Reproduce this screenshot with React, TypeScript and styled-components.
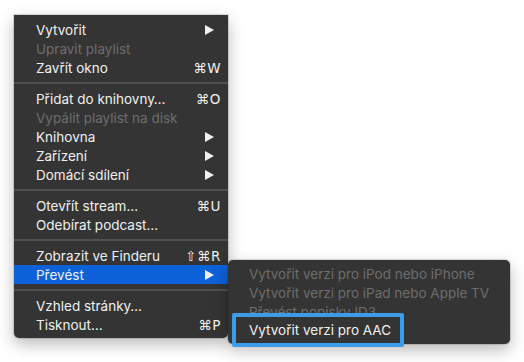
import React from "react"
import styled, { createGlobalStyle } from "styled-components"

const Global = createGlobalStyle`
  html, body {
    margin: 0;
    background: #ffffff;
  }
  body {
    font-family: "Inter", "Liberation Sans", "DejaVu Sans", sans-serif;
  }
`

const Page = styled.div`
  width: 524px;
  height: 362px;
  padding: 15px 0 0 14px;
  box-sizing: border-box;
`

const Menu = styled.div`
  position: relative;
  width: 214px;
  padding: 5px 0 4px 0;
  background: #343434;
  border-radius: 0 0 5px 5px;
  box-shadow: 0 0 0 1px rgba(0, 0, 0, 0.12), 0 6px 16px rgba(0, 0, 0, 0.28);
  box-sizing: border-box;
`

const Row = styled.div<{ $disabled?: boolean; $active?: boolean }>`
  position: relative;
  display: flex;
  align-items: center;
  height: 19px;
  padding: 0 7px 0 22px;
  font-size: 13.5px;
  color: ${p => (p.$disabled ? "#6d6d6d" : "#f0f0f0")};
  background: ${p => (p.$active ? "#0d61d9" : "transparent")};
`

const Label = styled.span`
  flex: 1;
  white-space: nowrap;
`

const Shortcut = styled.span`
  font-family: "DejaVu Sans", sans-serif;
  font-size: 13.5px;
  letter-spacing: 0.5px;
`

const Separator = styled.div`
  height: 2px;
  margin: 5px 0;
  background: #505050;
`

const Arrow = styled.svg`
  width: 9px;
  height: 10px;
  margin-right: 7px;
`

const Submenu = styled.div`
  position: absolute;
  left: 214px;
  top: -5px;
  width: 282px;
  padding: 4px 0;
  background: #343434;
  border-radius: 5px;
  box-shadow: 0 0 0 1px rgba(0, 0, 0, 0.12), 0 6px 16px rgba(0, 0, 0, 0.28);
  box-sizing: border-box;
`

const SubRow = styled(Row)`
  padding-left: 21px;
`

const Callout = styled.div`
  position: absolute;
  left: 4px;
  top: 53px;
  width: 172px;
  height: 34px;
  border: 4px solid #3c9ce9;
  border-radius: 2px;
  background: #343434;
  box-sizing: border-box;
  display: flex;
  align-items: center;
  padding-left: 13px;
  font-size: 13.5px;
  color: #f0f0f0;
`

const SubmenuArrow = () => (
  <Arrow viewBox="0 0 9 10">
    <polygon points="0,0 9,5 0,10" fill="#f0f0f0" />
  </Arrow>
)

type Item = {
  label: string
  shortcut?: string
  disabled?: boolean
  submenu?: boolean
}

const groups: Item[][] = [
  [
    { label: "Vytvořit", submenu: true },
    { label: "Upravit playlist", disabled: true },
    { label: "Zavřít okno", shortcut: "⌘W" },
  ],
  [
    { label: "Přidat do knihovny…", shortcut: "⌘O" },
    { label: "Vypálit playlist na disk", disabled: true },
    { label: "Knihovna", submenu: true },
    { label: "Zařízení", submenu: true },
    { label: "Domácí sdílení", submenu: true },
  ],
  [
    { label: "Otevřít stream…", shortcut: "⌘U" },
    { label: "Odebírat podcast…" },
  ],
  [
    { label: "Zobrazit ve Finderu", shortcut: "⇧⌘R" },
    { label: "Převést", submenu: true },
  ],
  [
    { label: "Vzhled stránky…" },
    { label: "Tisknout…", shortcut: "⌘P" },
  ],
]

const convertItems = [
  "Vytvořit verzi pro iPod nebo iPhone",
  "Vytvořit verzi pro iPad nebo Apple TV",
  "Převést popisky ID3",
]

const App = () => {
  return (
    <Page>
      <Global />
      <Menu>
        {groups.map((group, gi) => (
          <React.Fragment key={gi}>
            {gi > 0 && <Separator />}
            {group.map(item => {
              const active = item.label === "Převést"
              return (
                <Row key={item.label} $disabled={item.disabled} $active={active}>
                  <Label>{item.label}</Label>
                  {item.shortcut && <Shortcut>{item.shortcut}</Shortcut>}
                  {item.submenu && <SubmenuArrow />}
                  {active && (
                    <Submenu>
                      {convertItems.map(label => (
                        <SubRow key={label} $disabled>
                          <Label>{label}</Label>
                        </SubRow>
                      ))}
                      <SubRow>
                        <Label>Vytvořit verzi pro AAC</Label>
                      </SubRow>
                      <Callout>Vytvořit verzi pro AAC</Callout>
                    </Submenu>
                  )}
                </Row>
              )
            })}
          </React.Fragment>
        ))}
      </Menu>
    </Page>
  )
}

export default App
